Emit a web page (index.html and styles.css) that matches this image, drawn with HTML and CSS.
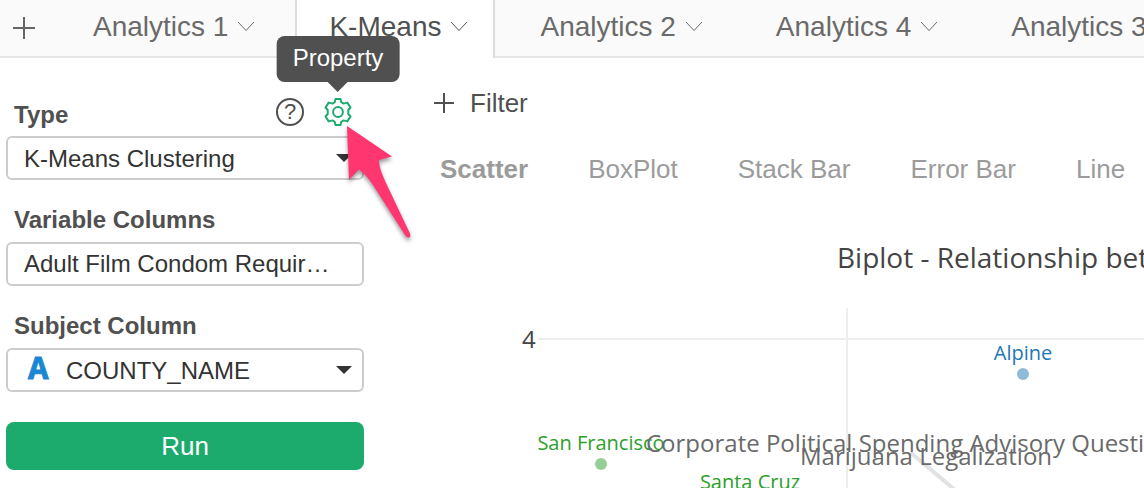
FILE: index.html
```
<!doctype html>
<html lang="en">
  <head>
    <meta charset="utf-8">
    <meta name="viewport" content="width=device-width, initial-scale=1">
    <title>Analytics - K-Means</title>
    <link rel="stylesheet" href="styles.css">
  </head>
<body>
<nav class="tabs">
  <button class="add_tab" aria-label="Add analytics">
    <svg width="22" height="22" viewBox="0 0 22 22"><path d="M11 0V22M0 11H22"/></svg>
  </button>
  <button class="tab">Analytics 1 <svg class="chevron" width="18" height="11" viewBox="0 0 18 11"><path d="M1 1L9 9.5L17 1"/></svg></button>
  <button class="tab active">K-Means <svg class="chevron" width="18" height="11" viewBox="0 0 18 11"><path d="M1 1L9 9.5L17 1"/></svg></button>
  <button class="tab">Analytics 2 <svg class="chevron" width="18" height="11" viewBox="0 0 18 11"><path d="M1 1L9 9.5L17 1"/></svg></button>
  <button class="tab">Analytics 4 <svg class="chevron" width="18" height="11" viewBox="0 0 18 11"><path d="M1 1L9 9.5L17 1"/></svg></button>
  <button class="tab">Analytics 3 <svg class="chevron" width="18" height="11" viewBox="0 0 18 11"><path d="M1 1L9 9.5L17 1"/></svg></button>
</nav>

<div class="contents">
  <div class="sidebar">
    <div class="field">
      <div class="field_head">
        <label for="type">Type</label>
        <div class="tools">
          <button class="tool help" aria-label="Help">?</button>
          <button class="tool property" aria-label="Property">
            <svg width="28" height="28" viewBox="0 0 28 28">
              <path d="M11.500 1H16.500L17.300 4.200L19.600 5.600L23.300 4.600L26.500 9.500L24.300 12V16L26.500 18.500L23.300 23.400L19.600 22.400L17.300 23.800L16.500 27H11.500L10.700 23.800L8.400 22.400L4.700 23.400L1.500 18.500L3.700 16V12L1.500 9.500L4.700 4.600L8.400 5.600L10.700 4.200Z"/>
              <circle cx="14" cy="14" r="4.900"/>
            </svg>
            <span class="tooltip">Property</span>
            <svg class="pointer" width="78" height="126" viewBox="0 0 78 126">
              <path d="M7 5L52 35.500L39 39C39 46 42 53 46 62L70 112.500Q71 116 69 116.500Q67 117 65 114L33 64C29 58 25 53 19 48.500L9 59Z"/>
            </svg>
          </button>
        </div>
      </div>
      <div class="select_box">
        <select id="type"><option>K-Means Clustering</option></select>
      </div>
    </div>

    <div class="field">
      <div class="field_head"><label for="columns">Variable Columns</label></div>
      <input type="text" id="columns" value="Adult Film Condom Requir…" readonly>
    </div>

    <div class="field">
      <div class="field_head"><label for="subject">Subject Column</label></div>
      <div class="select_box with_icon">
        <span class="type_icon">A</span>
        <select id="subject"><option>COUNTY_NAME</option></select>
      </div>
    </div>

    <button class="run">Run</button>
  </div>

  <div class="main">
    <button class="filter">
      <svg width="20" height="20" viewBox="0 0 20 20"><path d="M10 0V20M0 10H20"/></svg>
      Filter
    </button>
    <div class="charts">
      <a href="#scatter" class="current">Scatter</a>
      <a href="#boxplot">BoxPlot</a>
      <a href="#stackbar">Stack Bar</a>
      <a href="#errorbar">Error Bar</a>
      <a href="#line">Line</a>
    </div>
    <svg class="plot" id="scatter">
      <text class="title" x="431" y="68">Biplot - Relationship between Variables</text>
      <path class="grid" d="M132 139H2000M441 108V600"/>
      <path class="vector" d="M504 252L562 301"/>
      <text class="axis" x="116" y="148">4</text>
      <circle class="blue" cx="617" cy="174" r="6"/>
      <text class="point blue_text" x="617" y="160">Alpine</text>
      <circle class="green" cx="195" cy="264" r="6"/>
      <text class="point green_text" x="195" y="250">San Francisco</text>
      <text class="point green_text" x="344" y="289">Santa Cruz</text>
      <text class="variable" x="240" y="252">Corporate Political Spending Advisory Question</text>
      <text class="variable" x="394" y="265">Marijuana Legalization</text>
    </svg>
  </div>
</div>
</body>
</html>
```

FILE: styles.css
```
* {
  box-sizing: border-box;
}

html, body {
  height: 100%;
  margin: 0;
  overflow: hidden;
}

body {
  display: flex;
  flex-direction: column;
  background-color: #fff;
  color: #505050;
}

body, button, input, select {
  font-family: "Liberation Sans", Arial, sans-serif;
}

button {
  border: 0;
  padding: 0;
  background: none;
  color: inherit;
}

svg {
  fill: none;
  stroke: currentColor;
}

/* tabs */
.tabs {
  display: flex;
  flex: none;
  gap: 12px;
  height: 58px;
  overflow: hidden;
  background-color: #fafafa;
  box-shadow: inset 0 -2px #e6e6e6;
}

.add_tab {
  flex: none;
  width: 48px;
  color: #666;
}

.add_tab svg {
  display: block;
  margin: -2px auto 0;
  stroke-width: 2;
}

.tab {
  display: flex;
  flex: none;
  align-items: center;
  gap: 9px;
  padding: 0 28px 5px 33px;
  color: #6a6a6a;
  font-size: 28px;
  line-height: 32px;
}

.tab.active {
  padding: 0 25px 5px 32px;
  border: 2px solid #dcdcdc;
  border-width: 0 2px;
  background-color: #fff;
  color: #505050;
}

/* left side */
.contents {
  display: flex;
  flex: 1;
  min-height: 0;
}

.sidebar {
  flex: none;
  width: 370px;
  padding: 36px 6px 0;
}

.field {
  margin-bottom: 20px;
}

.field_head {
  display: flex;
  align-items: center;
  justify-content: space-between;
  height: 42px;
  padding: 0 12px 0 8px;
  font-size: 24px;
  font-weight: bold;
}

.field + .field .field_head {
  margin-top: -2px;
  height: 44px;
}

.tools {
  display: flex;
  gap: 20px;
  padding-bottom: 6px;
}

.tool {
  position: relative;
  width: 28px;
  height: 28px;
}

.tool svg {
  display: block;
}

.help {
  border: 2px solid #505050;
  border-radius: 50%;
  font-size: 22px;
  line-height: 24px;
}

.property {
  color: #1caa6d;
  stroke-width: 2;
  stroke-linejoin: round;
}

.tooltip {
  position: absolute;
  left: 50%;
  bottom: 44px;
  transform: translateX(-50%);
  padding: 8px 16px 10px;
  border-radius: 8px;
  background-color: #505050;
  color: #fff;
  font-size: 24px;
  line-height: 28px;
}

.tooltip::after {
  content: "";
  position: absolute;
  top: 100%;
  left: 50%;
  margin-left: -10px;
  border: 10px solid transparent;
  border-top-color: #505050;
  border-bottom: 0;
}

.pointer {
  position: absolute;
  z-index: 2;
  top: 23px;
  left: 16px;
  fill: #ff366f;
  stroke: none;
  filter: drop-shadow(0 3px 2px rgba(0, 0, 0, 0.4));
  pointer-events: none;
}

.select_box {
  position: relative;
}

.select_box::after {
  content: "";
  position: absolute;
  top: 18px;
  right: 12px;
  border: 8px solid transparent;
  border-top-color: #333;
  border-bottom: 0;
  pointer-events: none;
}

select, input {
  display: block;
  width: 100%;
  height: 44px;
  padding: 0 16px;
  border: 2px solid #ccc;
  border-radius: 6px;
  background-color: #fff;
  color: #333;
  font-size: 24px;
  appearance: none;
}

.with_icon select {
  padding-left: 58px;
}

.type_icon {
  position: absolute;
  top: 8px;
  left: 22px;
  color: #1b87d3;
  font: bold 34px/28px "Liberation Mono", monospace;
  -webkit-text-stroke: 1px #1b87d3;
}

.run {
  width: 100%;
  height: 48px;
  margin-top: 10px;
  border-radius: 8px;
  background-color: #1caa6d;
  color: #fff;
  font-size: 26px;
}

/* right side */
.main {
  display: flex;
  flex: 1;
  flex-direction: column;
  align-items: flex-start;
  min-width: 0;
  padding: 30px 0 0 36px;
}

.filter {
  display: flex;
  align-items: center;
  gap: 16px;
  margin-left: 28px;
  font-size: 26px;
  line-height: 30px;
}

.filter svg {
  stroke-width: 2;
}

.charts {
  display: flex;
  gap: 60px;
  margin: 36px 0 16px 34px;
  font-size: 26px;
  line-height: 30px;
  white-space: nowrap;
}

.charts a {
  color: #9b9b9b;
  text-decoration: none;
}

.charts .current {
  font-weight: bold;
}

/* biplot */
.plot {
  flex: 1;
  width: 100%;
  min-height: 0;
  font-family: "Open Sans", sans-serif;
}

.plot text {
  fill: #444;
  stroke: none;
}

.title {
  font-size: 28px;
}

.axis, .plot .variable {
  font-size: 24px;
}

.plot .variable {
  fill: #6a6a6a;
}

.point {
  font-size: 20px;
  text-anchor: middle;
}

.plot .blue_text {
  fill: #1f77b4;
}

.plot .green_text {
  fill: #2ca02c;
}

.grid {
  stroke: #eee;
  stroke-width: 2;
}

.vector {
  stroke: #e1e2e4;
  stroke-width: 4;
}

.blue {
  fill: #8fbbd9;
  stroke: none;
}

.green {
  fill: #95cf95;
  stroke: none;
}
```
